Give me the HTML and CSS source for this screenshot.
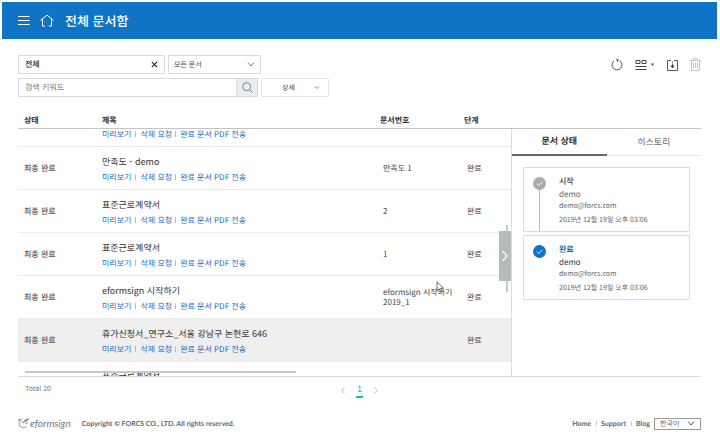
FILE: index.html
```html
<!DOCTYPE html>
<html lang="ko">
<head>
<meta charset="utf-8">
<title>전체 문서함</title>
<link rel="stylesheet" href="styles.css">
</head>
<body>
<header class="topbar">
  <button class="icon-btn" type="button" aria-label="메뉴"><svg width="12" height="12" viewBox="0 0 12 12"><path d="M0 1.500h11.500M0 5.500h11.500M0 9.500h11.500" fill="none" stroke="#fff" stroke-width="1"/></svg></button>
  <a class="home" href="#" aria-label="홈"><svg width="14" height="13" viewBox="0 0 14 13"><path d="M.5 6.500L7 1l6.500 5.500M2.500 5v7H5M11.500 5v7H9" fill="none" stroke="#fff"/></svg></a>
  <h1>전체 문서함</h1>
</header>
<main>
  <div class="toolbar">
    <form class="filters">
      <div class="filter-row">
        <div class="field folder"><input type="text" value="전체" aria-label="문서함"><button class="icon-btn" type="button" aria-label="지우기"><svg width="7" height="7" viewBox="0 0 7 7"><path d="M.8.8l5.400 5.400M6.200.8L.8 6.200" stroke="#222" stroke-width="1.100"/></svg></button></div>
        <div class="field kind"><select aria-label="문서 종류"><option>모든 문서</option></select><svg class="chev" width="8" height="5" viewBox="0 0 8 5"><path d="M1 .5l3 3.500L7 .5" fill="none" stroke="#777"/></svg></div>
      </div>
      <div class="filter-row">
        <div class="search"><input type="text" placeholder="검색 키워드" aria-label="검색 키워드"><button type="button" aria-label="검색"><svg width="11" height="11" viewBox="0 0 11 11"><circle cx="4.700" cy="4.700" r="4" fill="none" stroke="#777" stroke-width=".9"/><path d="M7.600 7.600l3 3" stroke="#777"/></svg></button></div>
        <button class="detail" type="button"><span>상세</span><svg width="6" height="4" viewBox="0 0 6 4"><path d="M1 .5l2 2 2-2" fill="none" stroke="#777" stroke-width=".9"/></svg></button>
      </div>
    </form>
    <div class="actions">
      <button class="icon-btn" type="button" aria-label="새로고침"><svg width="12" height="13" viewBox="0 0 12 13"><path d="M8.700 2.700A5 5 0 1 1 3 2.900" fill="none" stroke="#555"/><path d="M5.200.8L8 2 6.200 3.800z" fill="#333"/></svg></button>
      <button class="icon-btn view" type="button" aria-label="보기 방식"><svg width="12" height="12" viewBox="0 0 12 12"><path d="M1 1.500h4v3H1zM7 1.500h4v3H7zM.5 7.500h11M.5 10.500h11" fill="none" stroke="#444"/></svg><svg width="5" height="4" viewBox="0 0 5 4"><path d="M1 .5h3L2.500 3z" fill="#444"/></svg></button>
      <button class="icon-btn" type="button" aria-label="다운로드"><svg width="11" height="12" viewBox="0 0 11 12"><path d="M4 1.500H.5v10h10v-10H7M5.500 4.500v4" fill="none" stroke="#555"/><path d="M3.300 6.500h4.400L5.500 9.300zM5 2.500h1v1H5z" fill="#333"/></svg></button>
      <button class="icon-btn" type="button" aria-label="삭제"><svg width="11" height="13" viewBox="0 0 11 13"><path d="M0 2.500h11M3.500 2.500v-2h4v2M1.500 2.500v10h8v-10M3.500 5v5M5.500 5v5M7.500 5v5" fill="none" stroke="#c4c4c4"/></svg></button>
    </div>
  </div>

  <table class="docs head">
    <colgroup><col class="c-status"><col><col class="c-num"><col class="c-step"><col class="c-side"></colgroup>
    <thead><tr><th>상태</th><th>제목</th><th>문서번호</th><th>단계</th><th></th></tr></thead>
  </table>

  <div class="content">
    <section class="list">
      <table class="docs body">
        <colgroup><col class="c-status"><col><col class="c-num"><col class="c-step"></colgroup>
        <tbody>
          <tr class="partial"><td></td><td><p class="links"><a href="#">미리보기</a><a href="#">삭제 요청</a><a href="#">완료 문서 PDF 전송</a></p></td><td></td><td></td></tr>
          <tr><td>최종 완료</td><td><p class="name">만족도 - demo</p><p class="links"><a href="#">미리보기</a><a href="#">삭제 요청</a><a href="#">완료 문서 PDF 전송</a></p></td><td>만족도 1</td><td>완료</td></tr>
          <tr><td>최종 완료</td><td><p class="name">표준근로계약서</p><p class="links"><a href="#">미리보기</a><a href="#">삭제 요청</a><a href="#">완료 문서 PDF 전송</a></p></td><td>2</td><td>완료</td></tr>
          <tr><td>최종 완료</td><td><p class="name">표준근로계약서</p><p class="links"><a href="#">미리보기</a><a href="#">삭제 요청</a><a href="#">완료 문서 PDF 전송</a></p></td><td>1</td><td>완료</td></tr>
          <tr><td>최종 완료</td><td><p class="name">eformsign 시작하기</p><p class="links"><a href="#">미리보기</a><a href="#">삭제 요청</a><a href="#">완료 문서 PDF 전송</a></p></td><td>eformsign 시작하기 2019_1</td><td>완료</td></tr>
          <tr class="selected"><td>최종 완료</td><td><p class="name">휴가신청서_연구소_서울 강남구 논현로 646</p><p class="links"><a href="#">미리보기</a><a href="#">삭제 요청</a><a href="#">완료 문서 PDF 전송</a></p></td><td></td><td>완료</td></tr>
          <tr class="last"><td></td><td><p class="name">표준근로계약서</p></td><td></td><td></td></tr>
        </tbody>
      </table>
      <div class="hscroll"></div>
      <div class="vscroll"></div>
      <button class="toggle" type="button" aria-label="패널 닫기"><svg width="8" height="14" viewBox="0 0 8 14"><path d="M1.500 2l4.500 5-4.500 5" fill="none" stroke="#fff" stroke-width="1.200"/></svg></button>
      <svg class="cursor" width="9" height="12" viewBox="0 0 9 12"><path d="M1 .8v9l2.200-2 1.500 3.200 1.300-.6-1.400-3.100H7.500z" fill="#fff" stroke="#444" stroke-width=".8"/></svg>
    </section>
    <aside class="panel">
      <div class="tabs"><button class="active" type="button">문서 상태</button><button type="button">히스토리</button></div>
      <ol class="steps">
        <li class="start">
          <div class="rail"><svg width="13" height="13" viewBox="0 0 13 13"><circle cx="6.500" cy="6.500" r="6.500" fill="#acacac"/><path d="M3.800 6.600l2 2 3.600-3.800" fill="none" stroke="#fff" stroke-width=".9"/></svg></div>
          <div><h2>시작</h2><p class="who">demo</p><p class="mail">demo@forcs.com</p><p class="date">2019년 12월 19일 오후 03:06</p></div>
        </li>
        <li class="done">
          <div class="rail"><svg width="13" height="13" viewBox="0 0 13 13"><circle cx="6.500" cy="6.500" r="6.500" fill="#1073c4"/><path d="M3.800 6.600l2 2 3.600-3.800" fill="none" stroke="#fff" stroke-width=".9"/></svg></div>
          <div><h2>완료</h2><p class="who">demo</p><p class="mail">demo@forcs.com</p><p class="date">2019년 12월 19일 오후 03:06</p></div>
        </li>
      </ol>
    </aside>
  </div>

  <div class="pager">
    <span class="total">Total 20</span>
    <nav aria-label="페이지">
      <a href="#" aria-label="이전"><svg width="4" height="7" viewBox="0 0 4 7"><path d="M3.500.5L.8 3.500l2.700 3" fill="none" stroke="#aaa" stroke-width=".8"/></svg></a>
      <a class="current" href="#">1</a>
      <a href="#" aria-label="다음"><svg width="4" height="7" viewBox="0 0 4 7"><path d="M.5.5l2.700 3-2.700 3" fill="none" stroke="#aaa" stroke-width=".8"/></svg></a>
    </nav>
    <span></span>
  </div>
</main>
<footer>
  <div class="brand"><svg width="12" height="11" viewBox="0 0 12 11"><path d="M4.500 2L.7 1l.8 7L5 10l3.500-1.500M1 1.500l3 3" fill="none" stroke="#888" stroke-width=".8"/><path d="M4 5.500C5.500 2 8 1 11.500.3 10.500 2 9 4 6 4.600zM6.500 5.500l4-1.500-2 2z" fill="#888"/></svg><span>eformsign</span></div>
  <p class="copy">Copyright © FORCS CO., LTD. All rights reserved.</p>
  <nav class="flinks"><a href="#">Home</a><a href="#">Support</a><a href="#">Blog</a></nav>
  <div class="lang"><select aria-label="언어"><option>한국어</option></select><svg class="chev" width="8" height="5" viewBox="0 0 8 5"><path d="M1 .5l3 3.500L7 .5" fill="none" stroke="#555"/></svg></div>
</footer>
</body>
</html>
```
FILE: styles.css
```css
* { box-sizing: border-box; }
body {
  margin: 0;
  padding: 2px 3px 0 2px;
  background: #fff;
  color: #444;
  font: 8px/12px "Noto Sans CJK KR", sans-serif;
  text-rendering: geometricPrecision;
}
h1, h2, p, ol { margin: 0; padding: 0; }
a { color: inherit; text-decoration: none; }
svg { display: block; }
button, input, select {
  margin: 0;
  padding: 0;
  border: 0;
  border-radius: 0;
  background: none;
  color: inherit;
  font: inherit;
  text-rendering: inherit;
  appearance: none;
}
.icon-btn { display: flex; align-items: center; }

.topbar {
  display: flex;
  align-items: center;
  height: 37px;
  padding-left: 16px;
  background: #1073c4;
  color: #fff;
}
.home { margin: 0 11px 0 10px; }
h1 { font-size: 13px; line-height: 20px; font-weight: 500; }

main { padding: 0 16px; }
.toolbar {
  display: flex;
  justify-content: space-between;
  padding: 16px 0 17px;
}
.filters { display: grid; gap: 4px; }
.filter-row { display: flex; gap: 3px; }
.field {
  display: flex;
  align-items: center;
  height: 19px;
  padding: 0 6px;
  border: 1px solid #dcdcdc;
}
.folder { width: 147px; color: #222; font-weight: 500; }
.kind { position: relative; width: 93px; padding: 0 5px; }
.field input, .search input { flex: 1; min-width: 0; }
.field select { width: 100%; font-size: 7px; }
.chev { position: absolute; right: 5px; pointer-events: none; }
.search { display: flex; width: 240px; height: 19px; border: 1px solid #dcdcdc; }
.search input { padding-left: 6px; }
.search input::placeholder { color: #777; opacity: 1; }
.search button {
  display: grid;
  place-items: center;
  width: 21px;
  border-left: 1px solid #dcdcdc;
  background: #e9edf0;
}
.detail {
  display: flex;
  align-items: center;
  justify-content: space-between;
  width: 68px;
  padding: 0 8px 0 20px;
  border: 1px solid #e6e6e6;
  border-radius: 2px;
  font-size: 7px;
}
.actions { display: flex; align-items: center; gap: 12px; height: 19px; }
.view { gap: 3px; }

.docs { width: 100%; border-collapse: collapse; table-layout: fixed; }
.c-status { width: 78px; }
.c-num { width: 84px; }
.c-step { width: 53px; }
.c-side { width: 190px; }
.docs th {
  height: 14px;
  padding: 0 0 0 6px;
  color: #333;
  font-weight: 700;
  text-align: left;
}
.head { border-bottom: 1px solid #c4c4c4; }
.content { display: flex; height: 248px; border-bottom: 1px solid #dcdcdc; }
.list { position: relative; flex: 1; overflow: hidden; }
.docs td { height: 43px; padding: 2px 0 0 9px; border-bottom: 1px solid #ebebeb; }
.docs td:first-child, .docs td:nth-child(2) { padding-left: 6px; }
.docs td:first-child { font-weight: 500; color: #555; }
.docs .partial td { height: 18px; padding-top: 0; vertical-align: top; }
.partial .links { margin-top: 0; }
.docs .last td { padding-top: 7px; vertical-align: top; }
.selected { background: #efefef; }
.name { color: #333; font-size: 9px; line-height: 14px; }
.docs td:nth-child(3) { line-height: 10px; }
.links { display: flex; margin-top: 3px; color: #1a6fc0; line-height: 12px; }
.links a + a { margin-left: 4px; }
.links a + a::before {
  content: "";
  display: inline-block;
  width: 1px;
  height: 6px;
  margin-right: 4px;
  background: #bbb;
}
.links a:last-child { margin-left: 3px; }
.hscroll {
  position: absolute;
  bottom: 3px;
  left: 7px;
  width: 55%;
  height: 2px;
  background: #c8c8c8;
}
.vscroll { position: absolute; top: 96px; right: 3px; width: 2px; height: 67px; background: #c8c8c8; }
.toggle {
  position: absolute;
  top: 102px;
  right: 0;
  display: grid;
  place-items: center;
  width: 12px;
  height: 50px;
  background: #b5bcbe;
}
.cursor { position: absolute; top: 152px; right: 66px; }

.panel { width: 190px; border-left: 1px solid #dcdcdc; }
.tabs { display: flex; }
.tabs button {
  flex: 1;
  height: 27px;
  border-bottom: 1px solid #e6e6e6;
  color: #666;
  font-size: 9px;
}
.tabs .active { border-bottom: 2px solid #666; color: #333; font-weight: 700; }
.steps { display: grid; gap: 3px; padding: 11px 11px 0; list-style: none; }
.steps li {
  display: flex;
  gap: 13px;
  padding-left: 9px;
  border: 1px solid #dcdcdc;
  color: #666;
  line-height: 10px;
}
.steps li > div:last-child { padding: 7px 0 6px; }
.rail { display: flex; flex-direction: column; align-items: center; padding-top: 9px; }
.start .rail::after { content: ""; flex: 1; width: 1px; background: #bbb; }
.steps h2 { font-size: 8px; line-height: 14px; font-weight: 700; }
.who { font-size: 8px; line-height: 12px; }
.mail, .date { font-size: 7px; }
.date { margin-top: 4px; }
.done h2 { color: #1073c4; }
.done .who { color: #333; }

.pager {
  display: grid;
  grid-template-columns: 1fr auto 1fr;
  align-items: start;
  padding-top: 6px;
}
.total { padding-left: 7px; color: #777; font-size: 7px; }
.pager nav { display: flex; align-items: center; gap: 11px; }
.current {
  padding: 0 1px 1px;
  border-bottom: 2px solid #27b3ad;
  color: #27b3ad;
  font-size: 9px;
}

footer {
  display: flex;
  align-items: center;
  padding: 20px 16px 0;
  color: #666;
  font: 700 7px/12px Lato, "Noto Sans CJK KR", sans-serif;
}
.brand {
  display: flex;
  color: #777;
  font: italic 10px/12px Lato, sans-serif;
}
.copy { flex: 1; margin-left: 11px; }
.flinks { display: flex; align-items: center; }
.flinks a + a::before {
  content: "";
  display: inline-block;
  width: 1px;
  height: 5px;
  margin: 0 4px 0 5px;
  background: #ccc;
}
.lang {
  position: relative;
  display: flex;
  align-items: center;
  width: 47px;
  height: 12px;
  margin-left: 4px;
  border: 1px solid #999;
}
.lang select { width: 100%; padding-left: 5px; font-size: 7px; font-weight: 400; line-height: 10px; }
```
